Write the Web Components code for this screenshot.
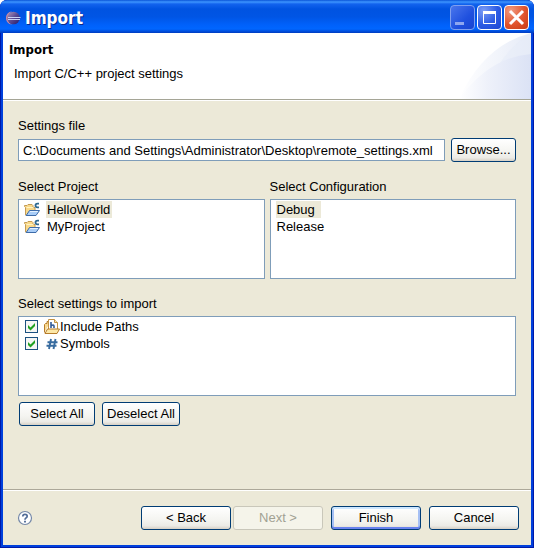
<!DOCTYPE html>
<html lang="en">
<head>
<meta charset="utf-8">
<title>Import</title>
<style>
  body { margin: 0; background: #fff; color: #000; font: 13px/16px "Liberation Sans", Arial, sans-serif; }
</style>
</head>
<body>
<import-dialog></import-dialog>
<script>
const define = (name, html, setup) => {
  const template = document.createElement('template');
  template.innerHTML = '<style>*{box-sizing:border-box}:host{box-sizing:border-box}[hidden]{display:none}</style>' + html;
  customElements.define(name, class extends HTMLElement {
    connectedCallback() {
      if (this.shadowRoot) return;
      const root = this.attachShadow({ mode: 'open' });
      root.append(template.content.cloneNode(true));
      if (setup) setup(this, root);
    }
  });
};

const icons = {
  eclipse: `<defs><linearGradient id="g" x1="0" y1="0" x2="1" y2="1"><stop offset="0" stop-color="#b49cbc"/><stop offset=".5" stop-color="#5a4a92"/><stop offset="1" stop-color="#241a6a"/></linearGradient></defs>
    <path d="M7 1.500C3.500 1.500 1 4.500 1 8s2.500 6.500 6 6.500C4 13 3 10.500 3 8s1-5 4-6.500z" fill="#c98aa0"/>
    <circle cx="8.500" cy="8" r="6.300" fill="url(#g)"/><path d="M3 7.500h12.500M3 9.500h12" stroke="#c8d3f4"/>`,
  project: `<path d="M1.500 13V5.500l-1-1v-1H3l1-1h4l1 1v2h2v4l-8 4z" fill="#f9d98a" stroke="#c39b54"/>
    <path d="M2.500 5.500h7" stroke="#fff3c4"/>
    <path d="M2.200 13.500 5.500 8.500h10l-3.500 5z" fill="#a9cdf7" stroke="#3c6ba9"/><path d="M6 9.500h8" stroke="#e3f1ff"/>
    <path d="M15 1.600h-1.500C12 1.600 11.500 2.300 11.500 3.500s.5 1.900 2 1.900H15" fill="none" stroke="#2f6a91" stroke-width="1.800"/>`,
  include: `<path d="M.5 13.500v-8l1-1H3v-2h2l1 1" fill="#f8d992" stroke="#b77d2b"/>
    <path d="M4.500.500h6l3 3v8h-9z" fill="#fff" stroke="#c29242"/><path d="M10.500.500v3h3" fill="#f8e3b3" stroke="#c29242"/>
    <path d="M7 3v6M7 6.800q2.800-1.800 3 .2V9" fill="none" stroke="#315a97" stroke-width="1.600"/>
    <path d="M1 14.500 3.500 10h12l-2.500 4.500z" fill="#fce8a8" stroke="#b77d2b"/>`,
  symbol: `<path d="M7 3 5 13M11.500 3l-2 10M3.500 6.200h10M2.500 9.800h10" fill="none" stroke="#376b9f" stroke-width="1.900"/>`,
  help: `<circle cx="8" cy="8" r="6.500" fill="#fff" stroke="#7488a8" stroke-width="1.200"/><path d="M5.800 6.500Q5.800 4.400 8 4.400t2.200 1.900Q10.200 7.500 8.700 8.200 8 8.600 8 9.800" fill="none" stroke="#526d98" stroke-width="1.700"/><path d="M8 10.800v1.800" stroke="#526d98" stroke-width="1.900"/>`,
  minimize: `<path d="M5 17h9v3H5z" fill="#8ea6ef"/>`,
  maximize: `<path d="M6.500 7.500h12v11h-12z" fill="none" stroke="#fff"/><path d="M6 6h13v3H6z" fill="#fff"/>`,
  close: `<path d="m6 6 13 13M19 6 6 19" stroke="#fff" stroke-width="3"/>`
};

define('xp-icon', `<style>
  :host { display: block; flex: none; width: 16px; height: 16px; }
  :host([large]) { width: 25px; height: 25px; }
  svg { display: block; width: 100%; height: 100%; }
</style><svg aria-hidden="true"></svg>`, (host, root) => {
  const svg = root.querySelector('svg');
  const size = host.hasAttribute('large') ? 25 : 16;
  svg.setAttribute('viewBox', `0 0 ${size} ${size}`);
  svg.innerHTML = icons[host.getAttribute('name')];
});

define('xp-button', `<style>
  :host { display: block; flex: none; min-width: 65px; }
  button { display: block; width: 100%; height: 24px; padding: 0 4px; white-space: nowrap;
    border: 1px solid #003c74; border-radius: 3px; color: #000; font: inherit;
    background: linear-gradient(#fff, #f4f4f0 60%, #ecebe6 85%, #d6d0c5); }
  :host([primary]) button { box-shadow: inset 0 2px #cee7ff, inset 0 -2px #6982ee, inset 2px 0 #a6c0f4, inset -2px 0 #a6c0f4; }
  button:disabled { border-color: #c9c7ba; background: #f5f4ea; color: #a1a192; }
</style><button type="button"><slot></slot></button>`, (host, root) => {
  root.querySelector('button').disabled = host.hasAttribute('disabled');
});

define('caption-button', `<style>
  :host { display: block; }
  button { display: block; width: 25px; height: 25px; padding: 0; border: 1px solid #fff; border-radius: 4px; color: #fff;
    background: radial-gradient(circle at 25% 20%, #7a9cf5, #2c5be4 55%, #1c46d2); }
  :host([kind=minimize]) button { border-color: #7f9ff0; background: linear-gradient(135deg, #4a76ec, #1f50df 60%, #1844d0); }
  :host([kind=close]) button { background: radial-gradient(circle at 25% 20%, #f09a80, #e1542c 55%, #c63c14); }
  span { display: block; width: 25px; height: 25px; margin: -1px; }
</style><button type="button"><span></span></button>`, (host, root) => {
  const kind = host.getAttribute('kind');
  root.querySelector('button').setAttribute('aria-label', kind);
  root.querySelector('span').innerHTML = `<xp-icon large name="${kind}"></xp-icon>`;
});

define('title-bar', `<style>
  :host { display: flex; align-items: center; gap: 2px; height: 33px; padding: 2px 5px 0 5px;
    background: linear-gradient(#0a54d8 0, #3d95ff 2px, #1263ee 4px, #0053e1 9px, #0055e5 17px, #0061fb 25px, #0066ff 29px, #0050e0 31px, #003bbf 33px); }
  h1 { flex: 1; margin: 0 0 0 2px; color: #fff; text-shadow: 1px 1px #0a2a8c; font: bold 17px/22px "DejaVu Sans Condensed", "DejaVu Sans", sans-serif; }
</style><xp-icon name="eclipse"></xp-icon><h1><slot></slot></h1>
<caption-button kind="minimize"></caption-button><caption-button kind="maximize"></caption-button><caption-button kind="close"></caption-button>`);

define('wizard-header', `<style>
  :host { display: flex; justify-content: space-between; background: #fff; height: 68px; border-bottom: 1px solid #fff; box-shadow: inset 0 -1px #a5a596; }
  div { padding: 9px 0 0 6px; }
  h2 { margin: 0; font: bold 13px/16px "DejaVu Sans Condensed", "DejaVu Sans", sans-serif; }
  p { margin: 8px 0 0 5px; }
  svg { display: block; width: 72px; height: 66px; flex: none; }
</style><div><h2><slot name="title"></slot></h2><p><slot></slot></p></div>
<svg viewBox="0 0 72 66" aria-hidden="true"><defs>
  <linearGradient id="a"><stop offset="0" stop-color="#fff"/><stop offset="1" stop-color="#e6ebf7"/></linearGradient>
  <linearGradient id="b"><stop offset="0" stop-color="#fff"/><stop offset=".4" stop-color="#eef1fa"/><stop offset="1" stop-color="#dbe2f5"/></linearGradient></defs>
  <path d="M0 66Q25 12 72 0v66z" fill="url(#a)"/><path d="M24 66Q39 20 72 0v66z" fill="#e6ebf7" opacity=".5"/><path d="M0 66Q31 24 72 21v45z" fill="url(#b)"/></svg>`);

define('file-field', `<style>
  :host { display: grid; gap: 4px; }
  div { display: flex; align-items: center; gap: 6px; }
  input { flex: 1; min-width: 0; height: 22px; margin: 0; padding: 0 4px; border: 1px solid #7f9db9; border-radius: 0; background: #fff; color: #000; font: inherit; }
</style><label for="file"></label><div><input id="file" type="text"><slot></slot></div>`, (host, root) => {
  root.querySelector('label').textContent = host.getAttribute('label');
  root.querySelector('input').value = host.getAttribute('value');
});

define('list-panel', `<style>
  :host { display: grid; gap: 4px; min-width: 0; }
  div { min-height: 80px; padding: 1px 5px; border: 1px solid #7f9db9; background: #fff; }
</style><span id="caption"></span><div aria-labelledby="caption"><slot></slot></div>`, (host, root) => {
  root.querySelector('span').textContent = host.getAttribute('label');
  root.querySelector('div').setAttribute('role', host.getAttribute('kind') || 'listbox');
});

define('list-row', `<style>
  :host { display: flex; align-items: center; gap: 6px; height: 17px; }
  span { padding: 0 6px 0 1px; line-height: 17px; }
  :host([icon]) span { padding-right: 2px; }
  :host([selected]) span { background: #ece9d8; }
</style><xp-icon hidden></xp-icon><span><slot></slot></span>`, (host, root) => {
  host.setAttribute('role', 'option');
  host.setAttribute('aria-selected', host.hasAttribute('selected'));
  const icon = root.querySelector('xp-icon');
  if (host.hasAttribute('icon')) {
    const shown = document.createElement('xp-icon');
    shown.setAttribute('name', host.getAttribute('icon'));
    icon.replaceWith(shown);
  } else icon.remove();
});

define('check-row', `<style>
  :host { display: block; padding-left: 1px; }
  label { display: flex; align-items: center; height: 17px; }
  input { appearance: none; flex: none; width: 13px; height: 13px; margin: 0 6px 0 0; border: 1px solid #1c5180; background: #f6f6f4; display: grid; }
  input:checked::before { content: ""; background: #21a121; clip-path: polygon(18% 36%, 41% 59%, 82% 18%, 82% 45%, 41% 86%, 18% 63%); }
</style><label><input type="checkbox" checked><span id="icon"></span><slot></slot></label>`, (host, root) => {
  root.querySelector('#icon').innerHTML = `<xp-icon name="${host.getAttribute('icon')}"></xp-icon>`;
});

define('help-button', `<style>
  :host { display: block; }
  button { display: block; padding: 0; border: 0; background: none; }
</style><button type="button" aria-label="Help"><xp-icon name="help"></xp-icon></button>`);

define('wizard-footer', `<style>
  :host { display: flex; align-items: center; gap: 8px; padding: 16px 12px 15px 14px; border-top: 1px solid #aca899; box-shadow: inset 0 1px #fff; }
  help-button { margin-right: auto; }
  .pair { display: flex; gap: 2px; }
  xp-button { min-width: 90px; }
</style><help-button></help-button>
<div class="pair"><xp-button>&lt; Back</xp-button><xp-button disabled>Next &gt;</xp-button></div>
<xp-button primary>Finish</xp-button><xp-button>Cancel</xp-button>`);

define('import-dialog', `<style>
  :host { display: flex; flex-direction: column; min-height: 100vh; border-radius: 7px 7px 0 0; overflow: hidden; background: #0040dc; box-shadow: inset 0 0 0 1px #0019a8; }
  section { flex: 1; display: flex; flex-direction: column; margin: 0 3px 3px; background: #ece9d8; }
  main { flex: 1; display: grid; align-content: start; gap: 17px; padding: 17px 15px; }
  .lists { display: grid; grid-template-columns: 1fr 1fr; gap: 5px; }
  .settings { display: grid; gap: 6px; }
  .actions { display: flex; gap: 7px; padding-left: 1px; }
  .actions xp-button { min-width: 76px; }
</style>
<title-bar>Import</title-bar>
<section>
  <wizard-header><span slot="title">Import</span>Import C/C++ project settings</wizard-header>
  <main>
    <file-field label="Settings file" value="C:\\Documents and Settings\\Administrator\\Desktop\\remote_settings.xml"><xp-button>Browse...</xp-button></file-field>
    <div class="lists">
      <list-panel label="Select Project"><list-row icon="project" selected>HelloWorld</list-row><list-row icon="project">MyProject</list-row></list-panel>
      <list-panel label="Select Configuration"><list-row selected>Debug</list-row><list-row>Release</list-row></list-panel>
    </div>
    <div class="settings">
      <list-panel kind="group" label="Select settings to import"><check-row icon="include">Include Paths</check-row><check-row icon="symbol">Symbols</check-row></list-panel>
      <div class="actions"><xp-button>Select All</xp-button><xp-button>Deselect All</xp-button></div>
    </div>
  </main>
  <wizard-footer></wizard-footer>
</section>`);
</script>
</body>
</html>
